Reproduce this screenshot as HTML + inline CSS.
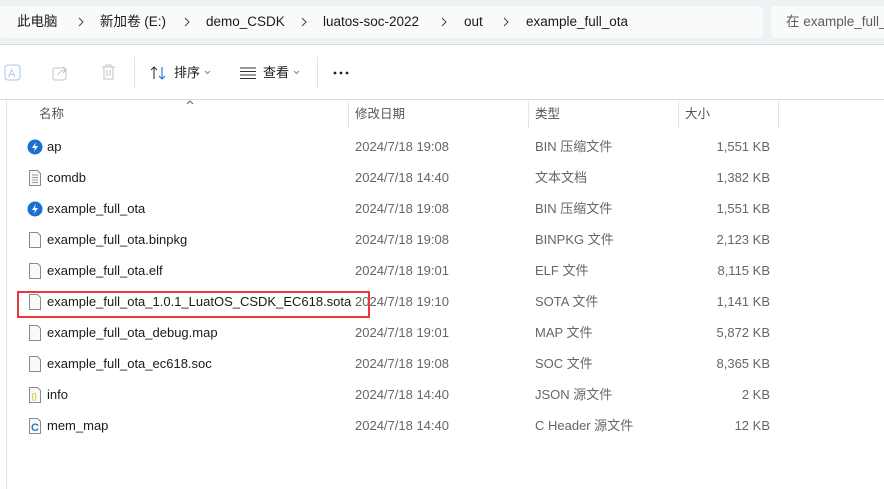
<!DOCTYPE html>
<html><head><meta charset="utf-8"><style>
*{margin:0;padding:0;box-sizing:border-box}
body{width:884px;height:489px;overflow:hidden;background:#fff;font-family:"Liberation Sans","Noto Sans CJK SC",sans-serif;font-size:13px;line-height:16px;color:#1a1a1a;position:relative}
span{line-height:16px}
.top{position:absolute;left:0;top:0;width:884px;height:45px;background:#eef2f4;border-bottom:1px solid #d8dcdf}
.addr{position:absolute;left:0;top:6px;width:763px;height:32px;background:#f9fbfb;border-radius:4px}
.search{position:absolute;left:771px;top:6px;width:120px;height:32px;background:#f9fbfb;border-radius:4px;color:#5c5c5c;padding:8px 0 0 15px;font-size:13.5px;white-space:nowrap;line-height:16px}
.crumb{position:absolute;top:14px;font-size:13.5px;color:#1a1a1a;white-space:nowrap}
.sep{position:absolute;top:15px}
.tb{position:absolute;left:0;top:45px;width:884px;height:55px;border-bottom:1px solid #d8dcdf}
.vl{position:absolute;top:12px;width:1px;height:31px;background:#e3e3e3}
.leftline{position:absolute;left:6px;top:100px;width:1px;height:389px;background:#e3e3e3}
.hdr{position:absolute;top:106px;color:#555;font-size:12.5px}
.colsep{position:absolute;top:101px;width:1px;height:27px;background:#e3e3e3}
.row{position:absolute;left:0;width:884px;height:22px}
.row span{position:absolute;top:3px;white-space:nowrap}
.n{left:47px;color:#1a1a1a}
.d{left:355px;color:#666}
.t{left:535px;color:#666}
.s{right:114px;color:#666}
.ic{position:absolute;left:27px;top:3px}
</style></head><body>
<div class="top">
<div class="addr"></div>
<span class="crumb" style="left:17px">此电脑</span><svg class="sep" style="left:77px" width="8" height="14"><path d="M2 3L6 7L2 11" fill="none" stroke="#444"/></svg>
<span class="crumb" style="left:100px">新加卷 (E:)</span><svg class="sep" style="left:183px" width="8" height="14"><path d="M2 3L6 7L2 11" fill="none" stroke="#444"/></svg>
<span class="crumb" style="left:206px">demo_CSDK</span><svg class="sep" style="left:300px" width="8" height="14"><path d="M2 3L6 7L2 11" fill="none" stroke="#444"/></svg>
<span class="crumb" style="left:323px">luatos-soc-2022</span><svg class="sep" style="left:440px" width="8" height="14"><path d="M2 3L6 7L2 11" fill="none" stroke="#444"/></svg>
<span class="crumb" style="left:464px">out</span><svg class="sep" style="left:502px" width="8" height="14"><path d="M2 3L6 7L2 11" fill="none" stroke="#444"/></svg>
<span class="crumb" style="left:526px">example_full_ota</span>
<div class="search">在 example_full_</div>
</div>
<div class="tb">
<svg style="position:absolute;left:4px;top:19px" width="17" height="17"><rect x="1" y="1" width="15" height="15" rx="3" fill="none" stroke="#a9c6e4"/><text x="4" y="13" font-size="11" fill="#a9c6e4" font-family="Liberation Sans">A</text></svg>
<svg style="position:absolute;left:52px;top:19px" width="17" height="17"><rect x="1" y="4" width="13" height="12" rx="2" fill="none" stroke="#c3c3c3"/><path d="M6 11 Q8 6 14 6 M11 3 L14 6 L11 9" fill="none" stroke="#a9c6e4"/></svg>
<svg style="position:absolute;left:100px;top:19px" width="17" height="17"><path d="M2 3H15M6 3V1H11V3M4 3V15H13V3M7 6V12M10 6V12" fill="none" stroke="#c3c3c3"/></svg>
<div class="vl" style="left:134px"></div>
<svg style="position:absolute;left:150px;top:20px" width="18" height="16"><path d="M4 14V2M1 5L4 2L7 5" fill="none" stroke="#333" stroke-width="1.1"/><path d="M12 2V14M9 11L12 14L15 11" fill="none" stroke="#1a73d6" stroke-width="1.1"/></svg>
<span style="position:absolute;left:174px;top:20px;font-size:13px">排序</span><svg style="position:absolute;left:204px;top:25px" width="7" height="5"><path d="M1 1L3.5 3.5L6 1" fill="none" stroke="#888"/></svg>
<svg style="position:absolute;left:239px;top:22px" width="18" height="12"><path d="M1 1H17M1 4.5H17M1 8H17M1 11.5H17" stroke="#333" stroke-width="1"/></svg>
<span style="position:absolute;left:263px;top:20px;font-size:13px">查看</span><svg style="position:absolute;left:293px;top:25px" width="7" height="5"><path d="M1 1L3.5 3.5L6 1" fill="none" stroke="#888"/></svg>
<div class="vl" style="left:317px"></div>
<svg style="position:absolute;left:333px;top:26px" width="16" height="4"><circle cx="2" cy="2" r="1.4" fill="#222"/><circle cx="8" cy="2" r="1.4" fill="#222"/><circle cx="14" cy="2" r="1.4" fill="#222"/></svg>
</div>
<div class="leftline"></div>
<svg style="position:absolute;left:186px;top:100px" width="8" height="5"><path d="M1 4L4 1L7 4" fill="none" stroke="#666"/></svg>
<span class="hdr" style="left:39px">名称</span>
<div class="colsep" style="left:348px"></div><span class="hdr" style="left:355px">修改日期</span>
<div class="colsep" style="left:528px"></div><span class="hdr" style="left:535px">类型</span>
<div class="colsep" style="left:678px"></div><span class="hdr" style="left:685px">大小</span>
<div class="colsep" style="left:778px"></div>

<div class="row" style="top:136px"><svg class="ic" width="16" height="16"><circle cx="8" cy="8" r="7.5" fill="#1a6fd0"/><path d="M9 3L5 9H8L7 13L11 7H8Z" fill="#fff"/></svg><span class="n">ap</span><span class="d">2024/7/18 19:08</span><span class="t">BIN 压缩文件</span><span class="s">1,551 KB</span></div>
<div class="row" style="top:167px"><svg class="ic" width="16" height="16"><path d="M2.5 .5H10.5L13.5 3.5V15.5H2.5Z" fill="#fafafa" stroke="#8a8a8a"/><path d="M5 5H11M5 7.5H11M5 10H11M5 12.5H11" stroke="#999"/></svg><span class="n">comdb</span><span class="d">2024/7/18 14:40</span><span class="t">文本文档</span><span class="s">1,382 KB</span></div>
<div class="row" style="top:198px"><svg class="ic" width="16" height="16"><circle cx="8" cy="8" r="7.5" fill="#1a6fd0"/><path d="M9 3L5 9H8L7 13L11 7H8Z" fill="#fff"/></svg><span class="n">example_full_ota</span><span class="d">2024/7/18 19:08</span><span class="t">BIN 压缩文件</span><span class="s">1,551 KB</span></div>
<div class="row" style="top:229px"><svg class="ic" width="16" height="16"><path d="M2.5 .5H10.5L13.5 3.5V15.5H2.5Z" fill="#fafafa" stroke="#8a8a8a"/></svg><span class="n">example_full_ota.binpkg</span><span class="d">2024/7/18 19:08</span><span class="t">BINPKG 文件</span><span class="s">2,123 KB</span></div>
<div class="row" style="top:260px"><svg class="ic" width="16" height="16"><path d="M2.5 .5H10.5L13.5 3.5V15.5H2.5Z" fill="#fafafa" stroke="#8a8a8a"/></svg><span class="n">example_full_ota.elf</span><span class="d">2024/7/18 19:01</span><span class="t">ELF 文件</span><span class="s">8,115 KB</span></div>
<div class="row" style="top:291px"><svg class="ic" width="16" height="16"><path d="M2.5 .5H10.5L13.5 3.5V15.5H2.5Z" fill="#fafafa" stroke="#8a8a8a"/></svg><span class="n">example_full_ota_1.0.1_LuatOS_CSDK_EC618.sota</span><span class="d">2024/7/18 19:10</span><span class="t">SOTA 文件</span><span class="s">1,141 KB</span></div>
<div class="row" style="top:322px"><svg class="ic" width="16" height="16"><path d="M2.5 .5H10.5L13.5 3.5V15.5H2.5Z" fill="#fafafa" stroke="#8a8a8a"/></svg><span class="n">example_full_ota_debug.map</span><span class="d">2024/7/18 19:01</span><span class="t">MAP 文件</span><span class="s">5,872 KB</span></div>
<div class="row" style="top:353px"><svg class="ic" width="16" height="16"><path d="M2.5 .5H10.5L13.5 3.5V15.5H2.5Z" fill="#fafafa" stroke="#8a8a8a"/></svg><span class="n">example_full_ota_ec618.soc</span><span class="d">2024/7/18 19:08</span><span class="t">SOC 文件</span><span class="s">8,365 KB</span></div>
<div class="row" style="top:384px"><svg class="ic" width="16" height="16"><path d="M2.5 .5H10.5L13.5 3.5V15.5H2.5Z" fill="#fafafa" stroke="#8a8a8a"/><text x="4.5" y="12" font-size="8" fill="#c8b400" font-family="Liberation Sans">{}</text></svg><span class="n">info</span><span class="d">2024/7/18 14:40</span><span class="t">JSON 源文件</span><span class="s">2 KB</span></div>
<div class="row" style="top:415px"><svg class="ic" width="16" height="16"><path d="M2.5 .5H10.5L13.5 3.5V15.5H2.5Z" fill="#fafafa" stroke="#8a8a8a"/><text x="4" y="13" font-size="11" font-weight="bold" fill="#2a7ab0" font-family="Liberation Sans">C</text></svg><span class="n">mem_map</span><span class="d">2024/7/18 14:40</span><span class="t">C Header 源文件</span><span class="s">12 KB</span></div>

<div style="position:absolute;left:17px;top:291px;width:353px;height:27px;border:2px solid #e8383d"></div>
</body></html>
